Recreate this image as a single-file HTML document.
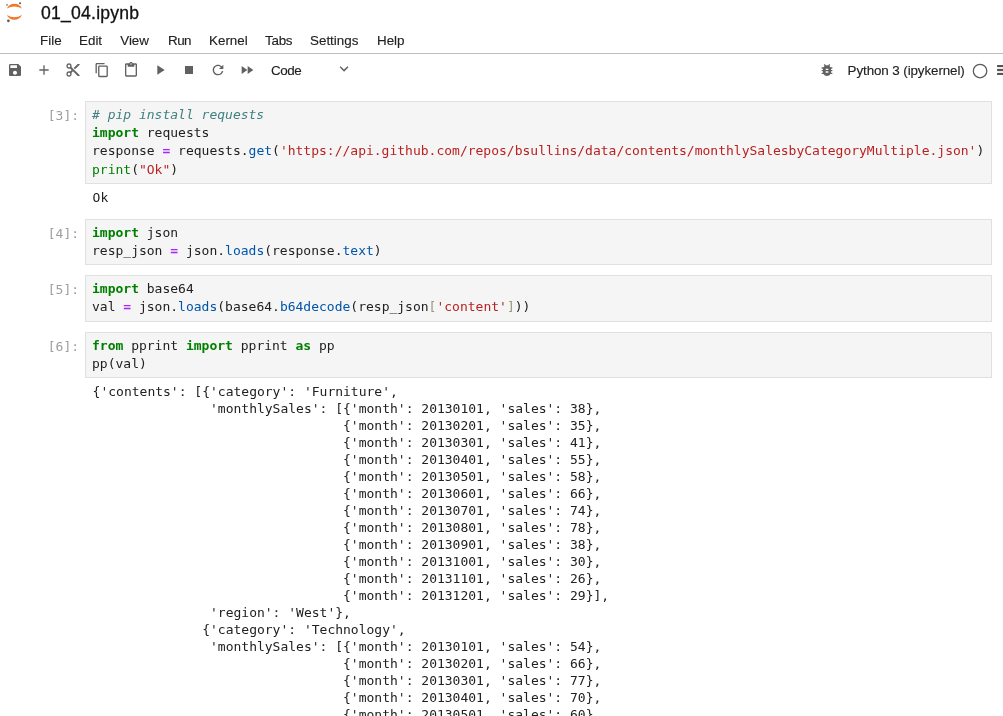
<!DOCTYPE html>
<html lang="en">
<head>
<meta charset="utf-8">
<title>01_04.ipynb</title>
<style>
html,body{margin:0;padding:0;background:#fff;}
body{width:1003px;height:716px;overflow:hidden;position:relative;font-family:"Liberation Sans",sans-serif;color:#212121;}
#top{position:absolute;left:0;top:0;width:1003px;height:53px;border-bottom:1px solid #bdbdbd;background:#fff;}
#logo{position:absolute;left:4px;top:1px;}
#title{-webkit-text-stroke:0.3px currentColor !important;position:absolute;left:41px;letter-spacing:0.22px;top:2px;font-size:17.6px;line-height:22px;color:#111;white-space:nowrap;}
#menu{position:absolute;left:0;top:32px;height:17px;font-size:13.4px;line-height:17px;color:#212121;}
#menu span{position:absolute;top:0;white-space:nowrap;}
#toolbar{position:absolute;left:0;top:54px;width:1003px;height:32px;}
#toolbar svg{position:absolute;}
#celltype{position:absolute;left:271.4px;letter-spacing:-0.45px;top:62px;font-size:13.4px;line-height:17px;color:#212121;}
#kernel{position:absolute;left:847px;padding-left:0.6px;letter-spacing:-0.1px;top:62px;font-size:13.4px;line-height:17px;color:#212121;white-space:nowrap;}
.prompt{position:absolute;left:0;width:79.1px;text-align:right;font:13px/18px "DejaVu Sans Mono","Liberation Mono",monospace;color:#9e9e9e;white-space:pre;}
.editor{position:absolute;left:85px;width:905px;border:1px solid #e0e0e0;background:#f5f5f5;box-sizing:content-box;}
.editor pre{margin:0;padding:4px 0 0 6px;font:13px/18.2px "DejaVu Sans Mono","Liberation Mono",monospace;color:#212121;white-space:pre;}
.out{position:absolute;left:92px;padding-left:0.6px;margin:0;font:13px/17px "DejaVu Sans Mono","Liberation Mono",monospace;color:#212121;white-space:pre;}
body>*{will-change:transform;}
#menu,#celltype,#kernel{-webkit-text-stroke:0.12px currentColor;}
.k{color:#008000;font-weight:bold;}
.b{color:#008000;}
.o{color:#aa22ff;font-weight:bold;}
.p{color:#0055aa;}
.s{color:#ba2121;}
.c{color:#408080;font-style:italic;}
.br{color:#999977;}
</style>
</head>
<body>
<div id="top">
<svg id="logo" width="22" height="22" viewBox="0 0 22 22">
<path d="M2.870 7.550 A8.340 8.340 0 0 1 17.960 7.550 A15.600 15.600 0 0 0 2.870 7.550Z" fill="#f37726"/>
<path d="M2.870 14.100 A8.370 8.370 0 0 0 17.960 14.100 A14.930 14.930 0 0 1 2.870 14.100Z" fill="#f37726"/>
<circle cx="3.04" cy="3.86" r="0.85" fill="#767677"/>
<circle cx="16.05" cy="2.25" r="1.1" fill="#616262"/>
<circle cx="4.38" cy="19.85" r="1.4" fill="#5a5a5a"/>
</svg>
<div id="title">01<span style="position:relative;top:-1px">_</span>04.ipynb</div>
<div id="menu">
<span style="left:40px">File</span>
<span style="left:79px">Edit</span>
<span style="left:120.2px">View</span>
<span style="left:168px;letter-spacing:-0.5px">Run</span>
<span style="left:209px">Kernel</span>
<span style="left:265px;letter-spacing:-0.25px">Tabs</span>
<span style="left:310px">Settings</span>
<span style="left:377px">Help</span>
</div>
</div>
<div id="toolbar">
<svg style="left:7.1px;top:8px" width="16" height="16" viewBox="0 0 24 24" fill="#616161"><path d="M17 3H5c-1.11 0-2 .9-2 2v14c0 1.1.89 2 2 2h14c1.1 0 2-.9 2-2V7l-4-4zm-5 16c-1.66 0-3-1.34-3-3s1.34-3 3-3 3 1.34 3 3-1.34 3-3 3zm3-10H5V5h10v4z"/></svg>
<svg style="left:36.0px;top:8px" width="16" height="16" viewBox="0 0 24 24" fill="#616161"><path d="M19 13h-6v6h-2v-6H5v-2h6V5h2v6h6v2z"/></svg>
<svg style="left:64.9px;top:8px" width="16" height="16" viewBox="0 0 24 24" fill="#616161"><path d="M9.64 7.64c.23-.5.36-1.05.36-1.64 0-2.21-1.79-4-4-4S2 3.79 2 6s1.79 4 4 4c.59 0 1.14-.13 1.64-.36L10 12l-2.36 2.36C7.14 14.13 6.59 14 6 14c-2.21 0-4 1.79-4 4s1.79 4 4 4 4-1.79 4-4c0-.59-.13-1.14-.36-1.64L12 14l7 7h3v-1L9.64 7.64zM6 8c-1.1 0-2-.89-2-2s.9-2 2-2 2 .89 2 2-.9 2-2 2zm0 12c-1.1 0-2-.89-2-2s.9-2 2-2 2 .89 2 2-.9 2-2 2zm6-7.5c-.28 0-.5-.22-.5-.5s.22-.5.5-.5.5.22.5.5-.22.5-.5.5zM19 3l-6 6 2 2 7-7V3z"/></svg>
<svg style="left:93.8px;top:8px" width="16" height="16" viewBox="0 0 18 18" fill="#616161"><path d="M11.9,1H3.2C2.4,1,1.7,1.7,1.7,2.5v10.2h1.5V2.5h8.7V1z M14.1,3.9h-8c-0.8,0-1.5,0.7-1.5,1.5v10.2c0,0.8,0.7,1.5,1.5,1.5h8 c0.8,0,1.5-0.7,1.5-1.5V5.4C15.5,4.6,14.9,3.9,14.1,3.9z M14.1,15.5h-8V5.4h8V15.5z"/></svg>
<svg style="left:122.7px;top:8px" width="16" height="16" viewBox="0 0 24 24" fill="#616161"><path d="M19 2h-4.18C14.4.84 13.3 0 12 0c-1.3 0-2.4.84-2.82 2H5c-1.1 0-2 .9-2 2v16c0 1.1.9 2 2 2h14c1.1 0 2-.9 2-2V4c0-1.1-.9-2-2-2zm-7 0c.55 0 1 .45 1 1s-.45 1-1 1-1-.45-1-1 .45-1 1-1zm7 18H5V4h2v3h10V4h2v16z"/></svg>
<svg style="left:151.6px;top:8px" width="16" height="16" viewBox="0 0 24 24" fill="#616161"><path d="M8 5v14l11-7z"/></svg>
<svg style="left:180.5px;top:8px" width="16" height="16" viewBox="0 0 24 24" fill="#616161"><path d="M6 6h12v12H6z"/></svg>
<svg style="left:209.7px;top:8px" width="16" height="16" viewBox="0 0 18 18" fill="#616161"><path d="M9 13.5c-2.49 0-4.5-2.01-4.5-4.5S6.51 4.500 9 4.500c1.24 0 2.36.52 3.170 1.330L10 8h5V3l-1.760 1.760C12.150 3.680 10.660 3 9 3 5.690 3 3.010 5.690 3.010 9S5.690 15 9 15c2.970 0 5.430-2.160 5.900-5h-1.520c-.46 2-2.240 3.500-4.380 3.500z"/></svg>
<svg style="left:239.3px;top:8px" width="16" height="16" viewBox="0 0 24 24" fill="#616161"><path d="M4 18l8.500-6L4 6v12zm9-12v12l8.500-6L13 6z"/></svg>
<svg style="left:336.4px;top:7px" width="16" height="16" viewBox="0 0 18 18" fill="#616161"><path d="M5.2,5.900L9,9.700l3.800-3.800l1.200,1.200l-4.900,5l-4.900-5L5.200,5.900z"/></svg>
<svg style="left:819px;top:8.4px" width="16" height="16" viewBox="0 0 24 24" fill="#616161"><path d="M20 8h-2.810c-.45-.78-1.070-1.450-1.820-1.960L17 4.410 15.590 3l-2.170 2.170C12.960 5.060 12.490 5 12 5c-.49 0-.96.06-1.410.17L8.410 3 7 4.410l1.620 1.630C7.880 6.550 7.260 7.220 6.810 8H4v2h2.090c-.05.33-.09.660-.09 1v1H4v2h2v1c0 .34.040.67.090 1H4v2h2.810c1.040 1.790 2.970 3 5.190 3s4.150-1.210 5.190-3H20v-2h-2.090c.05-.33.090-.66.090-1v-1h2v-2h-2v-1c0-.34-.04-.67-.09-1H20V8zm-6 8h-4v-2h4v2zm0-4h-4v-2h4v2z"/></svg>
<svg style="left:972px;top:8.8px" width="16" height="16" viewBox="0 0 16 16"><circle cx="8.05" cy="8" r="6.75" fill="none" stroke="#5a5a5a" stroke-width="1.25"/></svg>
<svg style="left:997px;top:10px" width="6" height="12" viewBox="0 0 6 12"><path d="M0.100 1.500h6v8.500H0.100z" fill="#ececec"/><path d="M0.100 0.950h6v2H0.100zM0.100 5.050h6v1.900H0.100zM0.100 9.100h6v2H0.100z" fill="#555"/></svg>
</div>
<div id="celltype">Code</div>
<div id="kernel">Python 3 (ipykernel)</div>

<div class="prompt" style="top:107px">[3]:</div>
<div class="editor" style="top:101px;height:81px"><pre><span class="c"># pip install requests</span>
<span class="k">import</span> requests
response <span class="o">=</span> requests.<span class="p">get</span>(<span class="s">'https://api.github.com/repos/bsullins/data/contents/monthlySalesbyCategoryMultiple.json'</span>)
<span class="b">print</span>(<span class="s">"Ok"</span>)</pre></div>
<pre class="out" style="top:189px">Ok</pre>

<div class="prompt" style="top:225px">[4]:</div>
<div class="editor" style="top:219px;height:44px"><pre><span class="k">import</span> json
resp_json <span class="o">=</span> json.<span class="p">loads</span>(response.<span class="p">text</span>)</pre></div>

<div class="prompt" style="top:281px">[5]:</div>
<div class="editor" style="top:275px;height:45px"><pre><span class="k">import</span> base64
val <span class="o">=</span> json.<span class="p">loads</span>(base64.<span class="p">b64decode</span>(resp_json<span class="br">[</span><span class="s">'content'</span><span class="br">]</span>))</pre></div>

<div class="prompt" style="top:338px">[6]:</div>
<div class="editor" style="top:332px;height:44px"><pre><span class="k">from</span> pprint <span class="k">import</span> pprint <span class="k">as</span> pp
pp(val)</pre></div>
<pre class="out" style="top:383px">{'contents': [{'category': 'Furniture',
               'monthlySales': [{'month': 20130101, 'sales': 38},
                                {'month': 20130201, 'sales': 35},
                                {'month': 20130301, 'sales': 41},
                                {'month': 20130401, 'sales': 55},
                                {'month': 20130501, 'sales': 58},
                                {'month': 20130601, 'sales': 66},
                                {'month': 20130701, 'sales': 74},
                                {'month': 20130801, 'sales': 78},
                                {'month': 20130901, 'sales': 38},
                                {'month': 20131001, 'sales': 30},
                                {'month': 20131101, 'sales': 26},
                                {'month': 20131201, 'sales': 29}],
               'region': 'West'},
              {'category': 'Technology',
               'monthlySales': [{'month': 20130101, 'sales': 54},
                                {'month': 20130201, 'sales': 66},
                                {'month': 20130301, 'sales': 77},
                                {'month': 20130401, 'sales': 70},
                                {'month': 20130501, 'sales': 60},
                                {'month': 20130601, 'sales': 63},
                                {'month': 20130701, 'sales': 55},</pre>
</body>
</html>
